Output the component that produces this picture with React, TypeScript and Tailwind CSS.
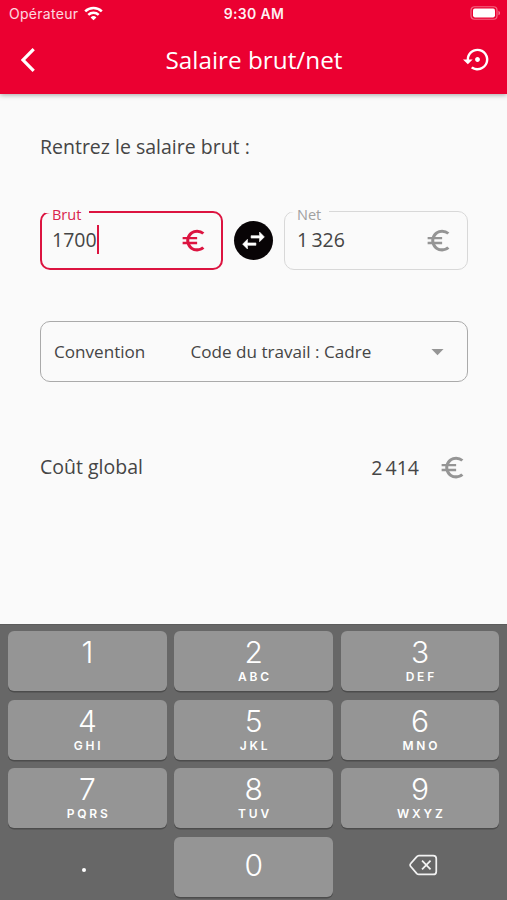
import clsx from "clsx";
import { MdArrowDropDown, MdEuroSymbol, MdSettingsBackupRestore } from "react-icons/md";

interface AmountFieldProps {
  label: string;
  value: string;
  focused?: boolean;
}

interface KeyProps {
  digit: string;
  letters?: string;
}

const keys: KeyProps[] = [
  { digit: "1", letters: "" },
  { digit: "2", letters: "ABC" },
  { digit: "3", letters: "DEF" },
  { digit: "4", letters: "GHI" },
  { digit: "5", letters: "JKL" },
  { digit: "6", letters: "MNO" },
  { digit: "7", letters: "PQRS" },
  { digit: "8", letters: "TUV" },
  { digit: "9", letters: "WXYZ" }
];

const StatusBar = () => (
  <div className="grid h-7 grid-cols-3 items-center pl-[9px] pr-[6px] font-['Inter',sans-serif] text-[14px] leading-none">
    <div className="flex items-center gap-[6px] text-white/85">
      <span className="tracking-[0.28px]">Opérateur</span>
      <svg width="19" height="15" viewBox="0 0 19 15" className="-mt-[2px]" fill="none" stroke="white" strokeWidth="2.5">
        <path d="M1.2 5.4a11.8 11.8 0 0 1 16.6 0" />
        <path d="M4.3 8.8a7.5 7.5 0 0 1 10.4 0" />
        <path d="M9.5 14.3 6.6 11.4a4.1 4.1 0 0 1 5.8 0Z" fill="white" stroke="none" />
      </svg>
    </div>
    <span className="pr-[2px] text-center font-semibold tracking-[0.3px] text-white/95">9:30 AM</span>
    <svg width="31" height="14" viewBox="0 0 31 14" className="-mt-[2px] justify-self-end" fill="none">
      <rect x="1" y="0.75" width="26" height="12.5" rx="3.5" stroke="white" strokeOpacity="0.4" strokeWidth="1.2" />
      <rect x="3" y="2.6" width="22" height="8.8" rx="1.8" fill="white" />
      <path d="M28.5 4.7c2 .9 2 3.7 0 4.6z" fill="white" fillOpacity="0.5" />
    </svg>
  </div>
);

const AmountField = ({ label, value, focused = false }: AmountFieldProps) => (
  <fieldset
    className={clsx(
      "min-w-0 rounded-[10px]",
      focused
        ? "h-[59px] w-[183px] border-2 border-[#dc1440] pl-[3px]"
        : "h-[60px] w-[184px] border border-[#d8d8d8] pl-[4px]",
    )}
  >
    <legend
      className={clsx(
        "h-[2px] pr-[8px] text-[14.5px]",
        focused ? "pl-[7px] leading-[7px] text-[#d9234c]" : "pl-[8px] leading-[9px] text-[#a0a0a0]",
      )}
    >
      {label}
    </legend>
    <div
      className={clsx(
        "flex items-center justify-between text-[19.5px] text-[#454545]",
        focused ? "h-[56px] pl-[7px] pr-[13px]" : "h-[57px] pl-[8px] pr-[14px]",
      )}
    >
      <span className="flex items-center pb-[2px]">
        {value}
        {focused && <span className="h-[29px] w-[2.5px] bg-[#dc1440]" />}
      </span>
      <MdEuroSymbol size={29} className={focused ? "text-[#dc1440]" : "text-[#959595]"} />
    </div>
  </fieldset>
);

const Key = ({ digit, letters }: KeyProps) => (
  <button
    className={clsx(
      "flex h-[60px] flex-col items-center rounded-[6px] bg-[#959595] text-white shadow-[0_1.5px_0_#4c4c4c]",
      letters === undefined ? "pt-[13px]" : "pt-[6px]",
    )}
  >
    <span className="text-[30px] font-[350] leading-[30px]">{digit}</span>
    <span className="mt-[4px] pl-[2.5px] text-[12px] font-semibold leading-[12px] tracking-[2.8px]">{letters}</span>
  </button>
);

const NumericKeypad = () => (
  <div className="grid h-[276px] grid-cols-3 content-start gap-x-[7.5px] gap-y-[8.5px] border-t border-[#5c5c5c] bg-[#676767] pl-[8px] pr-[7.5px] pt-[6px] font-['Inter',sans-serif]">
    {keys.map((key) => (
      <Key key={key.digit} {...key} />
    ))}
    <button className="flex items-center justify-center pr-[7px] pt-[7px]">
      <span className="size-[4px] rounded-full bg-white" />
    </button>
    <Key digit="0" />
    <button className="flex items-center justify-center pb-[3px] pl-[7px]">
      <svg width="29" height="22" viewBox="0 0 30 22" fill="none" stroke="#f2f2f2" strokeWidth="1.8" strokeLinejoin="round">
        <path d="M10.2 1.2H25a3.2 3.2 0 0 1 3.2 3.2v13.2a3.2 3.2 0 0 1-3.2 3.2H10.2a3 3 0 0 1-2.1-.9l-6.3-7.4a2 2 0 0 1 0-3l6.3-7.2a3 3 0 0 1 2.1-1.1Z" />
        <path d="m13.5 6.5 8.8 9M22.3 6.5l-8.8 9" />
      </svg>
    </button>
  </div>
);

export default function App() {
  return (
    <div className="flex h-[900px] w-[507px] flex-col overflow-hidden bg-[#fafafa] font-['Open_Sans',sans-serif] text-[#454545]">
      <header className="relative h-[94px] shrink-0 bg-[#eb0031] text-white shadow-[0_1px_5px_rgba(0,0,0,0.35)]">
        <StatusBar />
        <div className="grid h-[64px] grid-cols-[60px_1fr_60px] items-center pl-[21px] pr-[15px]">
          <svg width="14" height="24" viewBox="0 0 14 24" fill="none" stroke="currentColor" strokeWidth="3.2">
            <path d="M12.7 1.2 2.1 12l10.600 10.800" />
          </svg>
          <h1 className="pr-[5px] text-center text-[24.3px] leading-none">Salaire brut/net</h1>
          <MdSettingsBackupRestore size={29} className="-mt-px justify-self-end" />
        </div>
      </header>

      <main className="flex-1 px-[40px] pr-[39px] pt-[39px]">
        <p className="text-[19.5px] leading-[28px]">Rentrez le salaire brut :</p>

        <div className="mt-[49px] flex items-center">
          <AmountField label="Brut" value="1700" focused />
          <button className="ml-[11px] flex size-[39px] items-center justify-center rounded-full bg-[#080406] text-white">
            <svg width="29" height="29" viewBox="0 0 24 24" fill="currentColor" stroke="currentColor" strokeWidth="0.5">
              <path d="M6.99 11 3 15l3.99 4v-3H14v-2H6.99v-3zM21 9l-3.99-4v3H10v2h7.01v3L21 9z" />
            </svg>
          </button>
          <div className="ml-auto">
            <AmountField label="Net" value={"1\u2009326"} />
          </div>
        </div>

        <div className="mt-[51px] flex h-[61px] items-center rounded-[10px] border-[1.5px] border-[#aaaaaa] pl-[13px] pr-[15px] text-[17.1px]">
          <span className="w-[136.5px]">Convention</span>
          <span className="flex-1">Code du travail : Cadre</span>
          <MdArrowDropDown size={29} className="text-[#959595]" />
        </div>

        <div className="mt-[71px] flex h-[29px] items-center">
          <span className="flex-1 -translate-y-px text-[19.5px]">Coût global</span>
          <span className="text-[19.5px]">{"2\u2009414"}</span>
          <MdEuroSymbol size={29} className="ml-[19px] mr-px text-[#959595]" />
        </div>
      </main>

      <NumericKeypad />
    </div>
  );
}
